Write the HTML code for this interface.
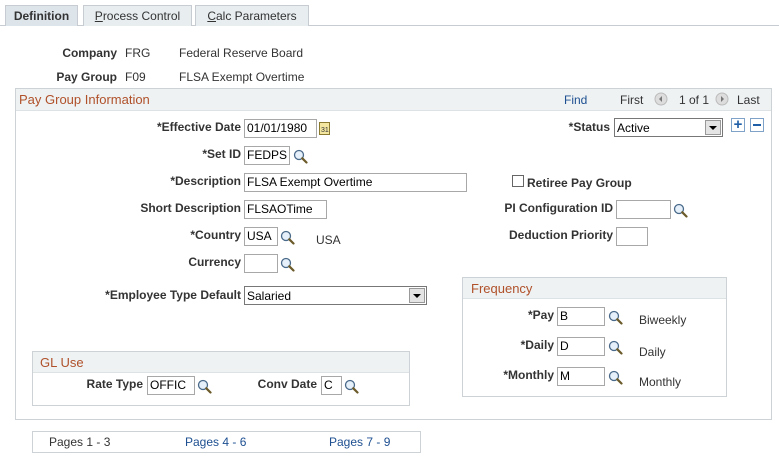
<!DOCTYPE html><html><head><style>
*{box-sizing:border-box}
body{margin:0;width:779px;height:463px;background:#fff;font-family:"Liberation Sans",Arial,sans-serif;font-size:12px;color:#333;position:relative;overflow:hidden}
.a{position:absolute;white-space:nowrap}
.l{position:absolute;white-space:nowrap;font-weight:bold;color:#333;text-align:right}
.i{position:absolute;height:19px;border:1px solid #a8a8a8;background:#fff;font-size:12px;padding:2px 2px;color:#000;line-height:13px;white-space:nowrap;overflow:hidden}
.t{position:absolute;color:#333;white-space:nowrap}
.h{position:absolute;color:#b0512a;font-size:13px;white-space:nowrap}
.m{position:absolute;width:15px;height:15px}
.tab{position:absolute;top:5px;height:21px;border:1px solid #c6ccd1;border-bottom:none;background:#e8edf0;font-size:12px;padding:3px 0 0;text-align:center;color:#333;white-space:nowrap}
</style></head><body>
<div class="a" style="left:0;top:25px;width:779px;height:1px;background:#c6ccd1"></div>
<div class="tab" style="left:5px;width:73px;background:#dde4ea;font-weight:bold;color:#333">Definition</div>
<div class="tab" style="left:83px;width:109px"><u>P</u>rocess Control</div>
<div class="tab" style="left:195px;width:114px"><u>C</u>alc Parameters</div>

<div class="l" style="right:662px;top:46px">Company</div><div class="t" style="left:125px;top:46px">FRG</div><div class="t" style="left:179px;top:46px">Federal Reserve Board</div>
<div class="l" style="right:662px;top:70px">Pay Group</div><div class="t" style="left:125px;top:70px">F09</div><div class="t" style="left:179px;top:70px">FLSA Exempt Overtime</div>

<div class="a" style="left:15px;top:88px;width:757px;height:332px;border:1px solid #cdd2d6"></div>
<div class="a" style="left:16px;top:89px;width:755px;height:22px;background:#eef2f3;border-bottom:1px solid #dde2e5"></div>
<div class="h" style="left:19px;top:92px">Pay Group Information</div>
<div class="t" style="left:564px;top:93px;color:#1d4f91">Find</div>
<div class="t" style="left:620px;top:93px">First</div>
<svg class="a" style="left:654px;top:92px" width="14" height="14"><circle cx="7" cy="7" r="6" fill="#ddd" stroke="#bbb"/><path d="M8 4L5 7L8 10Z" fill="#777"/></svg>
<div class="t" style="left:679px;top:93px">1 of 1</div>
<svg class="a" style="left:715px;top:92px" width="14" height="14"><circle cx="7" cy="7" r="6" fill="#ddd" stroke="#bbb"/><path d="M6 4L9 7L6 10Z" fill="#777"/></svg>
<div class="t" style="left:737px;top:93px">Last</div>

<div class="l" style="right:538px;top:120px">*Effective Date</div>
<div class="i" style="left:244px;top:119px;width:73px">01/01/1980</div>
<svg class="a" style="left:319px;top:121px" width="12" height="14"><rect x="0.5" y="1.5" width="10" height="12" fill="#f3e6a0" stroke="#8a7a30"/><text x="2" y="11" font-size="7" font-family="Liberation Sans" fill="#333">31</text></svg>
<div class="l" style="right:169px;top:120px">*Status</div>
<div class="i" style="left:614px;top:118px;width:109px;border-color:#777;padding-top:3px">Active</div>
<div class="a" style="left:705px;top:120px;width:16px;height:15px;background:#e4e4e4;border:1px solid #999"><div style="margin:5px auto 0;width:0;height:0;border-left:4px solid transparent;border-right:4px solid transparent;border-top:4px solid #000"></div></div>
<div class="a" style="left:731px;top:118px;width:14px;height:14px;border:1px solid #7fa3c8;background:#fff;color:#1f5fa8;font-weight:bold;font-size:15px;line-height:11px;text-align:center">+</div>
<div class="a" style="left:750px;top:118px;width:14px;height:14px;border:1px solid #7fa3c8;background:#fff"><div style="margin:5px 2px 0;height:2px;background:#1f5fa8"></div></div>

<div class="l" style="right:538px;top:147px">*Set ID</div>
<div class="i" style="left:244px;top:146px;width:46px">FEDPS</div>

<div class="l" style="right:538px;top:174px">*Description</div>
<div class="i" style="left:244px;top:173px;width:223px">FLSA Exempt Overtime</div>
<div class="a" style="left:512px;top:175px;width:12px;height:12px;border:1px solid #666;background:#fff"></div>
<div class="l" style="left:527px;top:176px">Retiree Pay Group</div>

<div class="l" style="right:538px;top:201px">Short Description</div>
<div class="i" style="left:244px;top:200px;width:83px">FLSAOTime</div>
<div class="l" style="right:166px;top:201px">PI Configuration ID</div>
<div class="i" style="left:616px;top:200px;width:55px"></div>

<div class="l" style="right:538px;top:228px">*Country</div>
<div class="i" style="left:244px;top:227px;width:34px">USA</div>
<div class="t" style="left:316px;top:233px">USA</div>
<div class="l" style="right:166px;top:228px">Deduction Priority</div>
<div class="i" style="left:616px;top:227px;width:32px"></div>

<div class="l" style="right:538px;top:255px">Currency</div>
<div class="i" style="left:244px;top:254px;width:34px"></div>

<div class="l" style="right:538px;top:288px">*Employee Type Default</div>
<div class="i" style="left:244px;top:286px;width:183px;border-color:#777;padding-top:3px">Salaried</div>
<div class="a" style="left:409px;top:288px;width:16px;height:15px;background:#e4e4e4;border:1px solid #999"><div style="margin:5px auto 0;width:0;height:0;border-left:4px solid transparent;border-right:4px solid transparent;border-top:4px solid #000"></div></div>

<div class="a" style="left:462px;top:277px;width:265px;height:120px;border:1px solid #cdd2d6"></div>
<div class="a" style="left:463px;top:278px;width:263px;height:21px;background:#eef2f3;border-bottom:1px solid #dde2e5"></div>
<div class="h" style="left:471px;top:281px">Frequency</div>
<div class="l" style="right:225px;top:308px">*Pay</div><div class="i" style="left:557px;top:307px;width:48px">B</div><div class="t" style="left:639px;top:313px">Biweekly</div>
<div class="l" style="right:225px;top:338px">*Daily</div><div class="i" style="left:557px;top:337px;width:48px">D</div><div class="t" style="left:639px;top:345px">Daily</div>
<div class="l" style="right:225px;top:368px">*Monthly</div><div class="i" style="left:557px;top:367px;width:48px">M</div><div class="t" style="left:639px;top:375px">Monthly</div>

<div class="a" style="left:32px;top:351px;width:378px;height:55px;border:1px solid #cdd2d6"></div>
<div class="a" style="left:33px;top:352px;width:376px;height:21px;background:#eef2f3;border-bottom:1px solid #dde2e5"></div>
<div class="h" style="left:40px;top:355px">GL Use</div>
<div class="l" style="right:636px;top:377px">Rate Type</div><div class="i" style="left:147px;top:376px;width:48px">OFFIC</div>
<div class="l" style="right:462px;top:377px">Conv Date</div><div class="i" style="left:321px;top:376px;width:21px">C</div>

<div class="a" style="left:32px;top:431px;width:389px;height:22px;border:1px solid #cdd2d6"></div>
<div class="t" style="left:49px;top:435px">Pages 1 - 3</div>
<div class="t" style="left:185px;top:435px;color:#1d4f91">Pages 4 - 6</div>
<div class="t" style="left:329px;top:435px;color:#1d4f91">Pages 7 - 9</div>

<svg width="0" height="0" style="position:absolute"><defs><g id="mg"><circle cx="6" cy="6" r="4.5" fill="#e6f0fa" stroke="#4a6a8a" stroke-width="1.3"/><path d="M9.3 9.3L13.5 13.5" stroke="#6b5a2a" stroke-width="2.2" stroke-linecap="round"/></g></defs></svg>
<svg class="m" style="left:293px;top:149px"><use href="#mg"/></svg>
<svg class="m" style="left:673px;top:203px"><use href="#mg"/></svg>
<svg class="m" style="left:280px;top:230px"><use href="#mg"/></svg>
<svg class="m" style="left:280px;top:257px"><use href="#mg"/></svg>
<svg class="m" style="left:608px;top:310px"><use href="#mg"/></svg>
<svg class="m" style="left:608px;top:340px"><use href="#mg"/></svg>
<svg class="m" style="left:608px;top:370px"><use href="#mg"/></svg>
<svg class="m" style="left:197px;top:379px"><use href="#mg"/></svg>
<svg class="m" style="left:344px;top:379px"><use href="#mg"/></svg>
</body></html>
